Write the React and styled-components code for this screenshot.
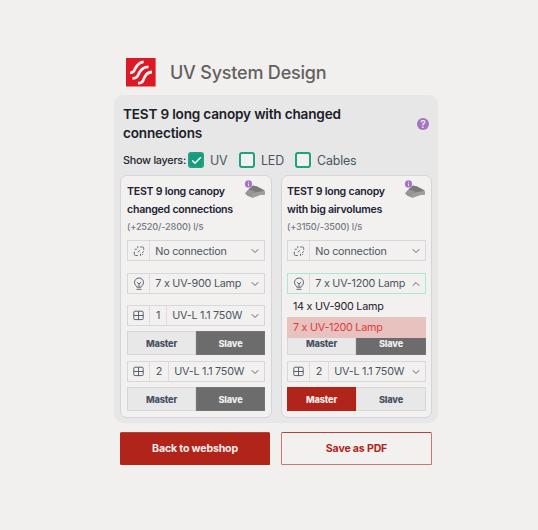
import React from "react";
import styled, { createGlobalStyle, css } from "styled-components";

const GlobalStyle = createGlobalStyle`
  * { box-sizing: border-box; }
  body { margin: 0; background: #f2f0ef; font-family: Inter, "Liberation Sans", sans-serif; }
  button { font-family: inherit; }
`;

const Page = styled.main`
  width: 538px;
  height: 530px;
  padding: 58px 100px 0 114px;
  background: #f2f0ef;
  overflow: hidden;
`;

const Header = styled.header`
  display: flex;
  align-items: center;
  gap: 14px;
  height: 29px;
  padding-left: 12px;
`;

const AppTitle = styled.h1`
  margin: 0;
  font-size: 18px;
  font-weight: 500;
  line-height: 29px;
  letter-spacing: -0.2px;
  color: #626160;
  white-space: nowrap;
`;

const Panel = styled.section`
  height: 328px;
  margin-top: 8px;
  padding: 9px 6px 0 6px;
  border-radius: 9px;
  background: #e7e7e7;
`;

const PanelHead = styled.div`
  display: flex;
  justify-content: space-between;
  height: 40px;
  padding: 0 3px;
`;

const PanelTitle = styled.h2`
  margin: 0;
  width: 240px;
  padding-top: 1px;
  font-size: 13.6px;
  font-weight: 600;
  line-height: 19px;
  letter-spacing: -0.19px;
  color: #1b2027;
`;

const HelpBadge = styled.span`
  display: flex;
  align-items: center;
  justify-content: center;
  width: 12px;
  height: 12px;
  margin: 14px 0 0;
  border-radius: 50%;
  background: #a374c4;
  color: #f5eef8;
  font-size: 10px;
  font-weight: 600;
  line-height: 12px;
`;

const Layers = styled.div`
  display: flex;
  align-items: center;
  height: 18px;
  margin-top: 7px;
  padding-left: 3px;
  font-size: 10.8px;
  font-weight: 500;
  letter-spacing: -0.25px;
  color: #22262c;
  white-space: nowrap;
`;

const LayersLabel = styled.span`
  width: 65px;
`;

const Layer = styled.label`
  display: flex;
  align-items: center;
  gap: 6px;
  width: ${(p) => p.$width}px;
  font-size: 12.4px;
  font-weight: 400;
  letter-spacing: -0.15px;
  color: #4b5563;
`;

const Box = styled.span`
  display: flex;
  align-items: center;
  justify-content: center;
  width: 16px;
  height: 16px;
  border: 2px solid #22a080;
  border-radius: 3px;
  background: ${(p) => (p.$checked ? "#159b79" : "#f3f1ef")};
`;

const Cards = styled.div`
  display: grid;
  grid-template-columns: 152px 151px;
  gap: 9px;
  margin-top: 6px;
`;

const Card = styled.article`
  height: 243px;
  padding: 6px 5px 0 ${(p) => p.$inset}px;
  border: 1px solid #d3d5da;
  border-radius: 7px;
  background: #f3f1f0;
`;

const CardHead = styled.div`
  display: flex;
  justify-content: space-between;
  height: 36px;
`;

const CardTitle = styled.h3`
  margin: 0;
  padding-top: 1px;
  font-size: 10.6px;
  font-weight: 600;
  line-height: 17.5px;
  letter-spacing: -0.25px;
  color: #1b2333;
  white-space: nowrap;
`;

const Thumb = styled.svg`
  flex: none;
  width: 22px;
  height: 20px;
  margin: -2px 0 0 -4px;
`;

const Flow = styled.div`
  height: 17px;
  font-size: 9.2px;
  font-weight: 500;
  line-height: 17px;
  letter-spacing: -0.18px;
  color: #737884;
`;

const Fields = styled.div`
  display: flex;
  flex-direction: column;
  width: ${(p) => p.$width}px;
  margin-top: 5px;
`;

const FieldWrap = styled.div`
  position: relative;
  margin-bottom: ${(p) => p.$gap}px;
`;

const Field = styled.div`
  display: flex;
  height: 21px;
  border: 1px solid ${(p) => (p.$open ? "#a9e8d2" : "#d7d7de")};
  font-size: 10.8px;
  line-height: ${(p) => (p.$low ? 21 : 20)}px;
  letter-spacing: -0.25px;
  color: #4b5563;
  white-space: nowrap;
`;

const Cell = styled.span`
  display: flex;
  align-items: center;
  justify-content: center;
  flex: none;
  width: ${(p) => p.$width}px;
  border-right: 1px solid #dcdce1;
`;

const Value = styled.span`
  flex: 1;
  padding-left: ${(p) => p.$pad}px;
`;

const Caret = styled.svg`
  flex: none;
  align-self: center;
  width: 8px;
  height: 8px;
  margin-right: 5px;
  transform: ${(p) => (p.$open ? "rotate(180deg)" : "none")};
`;

const Menu = styled.div`
  position: absolute;
  z-index: 2;
  top: 23px;
  left: 0;
  right: 0;
  background: #f3f1f0;
`;

const Option = styled.div`
  height: 21px;
  padding-left: 6px;
  font-size: 10.8px;
  line-height: 21px;
  letter-spacing: -0.27px;
  color: ${(p) => (p.$active ? "#e03c3c" : "#1d232d")};
  background: ${(p) => (p.$active ? "#e7c2be" : "#f3f1f0")};
`;

const Toggle = styled.div`
  display: grid;
  grid-template-columns: 69px 1fr;
  height: 24px;
  margin-bottom: ${(p) => p.$gap}px;
`;

const tones = {
  off: css`background: #e8e8e8; color: #465060; border-color: #d7d7da;`,
  dark: css`background: #6c6c6c; color: #efefef; border-color: #747474;`,
  red: css`background: #b1241a; color: #f8eeee; border-color: #b1241a;`,
};

const Side = styled.button`
  padding: 0;
  border: 1px solid;
  font-size: 9.2px;
  font-weight: 800;
  letter-spacing: -0.15px;
  ${(p) => tones[p.$tone]}
`;

const Actions = styled.footer`
  display: grid;
  grid-template-columns: 150px 151px;
  gap: 11px;
  padding: 9px 0 0 6px;
`;

const Action = styled.button`
  height: 33px;
  padding: 0;
  border: 1px solid ${(p) => (p.$solid ? "#b1241a" : "#cb7770")};
  border-top-color: #b1453d;
  border-radius: 1.5px;
  background: ${(p) => (p.$solid ? "#b1241a" : "#f3f1f0")};
  color: ${(p) => (p.$solid ? "#faeeee" : "#b1241a")};
  font-size: 10.6px;
  font-weight: 700;
  letter-spacing: -0.17px;
`;

const Logo = () => (
  <svg width="30" height="29" viewBox="0 0 30 29">
    <rect width="29.600" height="28.500" fill="#dc1a26" />
    <g fill="none" stroke="#fbf3f2" strokeWidth="2.800">
      <path d="M4 14.800c4.200.2 4-2.200 5.400-4.600C11.200 7 13 4 17.600 3.800" />
      <path d="M6.500 20.300c4.800.2 5-2.200 6.800-5.600 1.800-3.500 4-5.900 9.200-5.900" />
      <path d="M12 25.200c4.500 0 5-2.400 6.300-5.400 1.500-3.500 3.300-5.600 7.700-5.800" />
    </g>
  </svg>
);

const Tick = () => (
  <svg width="11" height="9" viewBox="0 0 11 9" fill="none" stroke="#fff" strokeWidth="1.600">
    <path d="M1.200 4.500 4 7.200 9.800 1.300" />
  </svg>
);

const icons = {
  link: (
    <svg width="12" height="12" viewBox="0 0 12 12" fill="none" stroke="#69707b" strokeWidth="1" strokeLinecap="round">
      <path d="M7.500 2H9.500Q10.700 2 10.700 3.200V4.500M4.500 10.500H2.500Q1.300 10.500 1.300 9.300V7M4.800 1.500v1.300M2 4.300h1.500M5 7l1.700-1.500M10.500 6.800 9.300 7.500M7.500 9v1.500M9.600 9.500v.1" />
    </svg>
  ),
  bulb: (
    <svg width="12" height="14" viewBox="0 0 12 14" fill="none" stroke="#596170" strokeWidth="1">
      <path d="M3.800 10.200V9.400a4.500 4.500 0 1 1 4.400 0v.8ZM3.600 12.300h4.800M4 5.300l2 1.600 2-1.600M6 6.900v3" />
    </svg>
  ),
  grid: (
    <svg width="11" height="11" viewBox="0 0 11 11" fill="none" stroke="#596170" strokeWidth="1">
      <rect x=".8" y="1.200" width="9.400" height="8.400" rx="1" />
      <path d="M5.500 1.200v8.400M.8 5.500h9.400" />
    </svg>
  ),
};

const HoodThumb = () => (
  <Thumb viewBox="0 0 22 20">
    <path d="M1 13.500 4.500 9.500 9 5.500 13 6.500 20.500 10.500 21 14.500 16 15 8.500 17.800 3.500 15.800Z" fill="#908f8e" />
    <path d="M4.500 9.500 9 5.500 13 6.500 20.500 10.500 10 13Z" fill="#7b7a79" />
    <path d="M1 13.500 4.500 9.500 11 11.500 7 15Z" fill="#989795" />
    <path d="M7 15 11 12.500 20.500 11 21 14.500 16 15 8.500 17.800Z" fill="#9f9e9d" />
    <circle cx="4.500" cy="3.900" r="3.600" fill="#a276c5" />
    <path d="M4.500 1.800v1M4.500 3.600v2.400" stroke="#e9def0" strokeWidth="1" />
  </Thumb>
);

function Select({ icon, number, numberWidth = 17, value, gap, open, low, options }) {
  return (
    <FieldWrap $gap={gap}>
      <Field $open={open} $low={low}>
        <Cell $width={22}>{icons[icon]}</Cell>
        {number && <Cell $width={numberWidth}>{number}</Cell>}
        <Value $pad={number ? 5.3 : 5.3}>{value}</Value>
        <Caret $open={open} viewBox="0 0 8 8" fill="none" stroke="#5b6470" strokeWidth="1" strokeLinecap="round">
          <path d="M1 2.500 4 5.500 7 2.500" />
        </Caret>
      </Field>
      {options && (
        <Menu>
          {options.map((o) => (
            <Option key={o} $active={o === value}>{o}</Option>
          ))}
        </Menu>
      )}
    </FieldWrap>
  );
}

function MasterSlave({ master, slave, gap = 0 }) {
  return (
    <Toggle $gap={gap}>
      <Side $tone={master}>Master</Side>
      <Side $tone={slave}>Slave</Side>
    </Toggle>
  );
}

function Canopy({ lines, flow, lamp, options, last, inset, fieldWidth }) {
  return (
    <Card $inset={inset}>
      <CardHead>
        <CardTitle>{lines[0]}<br />{lines[1]}</CardTitle>
        <HoodThumb />
      </CardHead>
      <Flow>{flow}</Flow>
      <Fields $width={fieldWidth}>
        <Select icon="link" value="No connection" gap={12} low />
        <Select icon="bulb" value={lamp} gap={11} open={!!options} options={options} />
        <Select icon="grid" number="1" value="UV-L 1.1 750W" gap={5} />
        <MasterSlave master="off" slave="dark" gap={6} />
        <Select icon="grid" number="2" numberWidth={19} value="UV-L 1.1 750W" gap={5} />
        <MasterSlave {...last} />
      </Fields>
    </Card>
  );
}

export default function App() {
  return (
    <>
      <GlobalStyle />
      <Page>
        <Header>
          <Logo />
          <AppTitle>UV System Design</AppTitle>
        </Header>
        <Panel>
          <PanelHead>
            <PanelTitle>TEST 9 long canopy with changed connections</PanelTitle>
            <HelpBadge>?</HelpBadge>
          </PanelHead>
          <Layers>
            <LayersLabel>Show layers:</LayersLabel>
            <Layer $width={51}><Box $checked><Tick /></Box>UV</Layer>
            <Layer $width={56}><Box />LED</Layer>
            <Layer $width={70}><Box />Cables</Layer>
          </Layers>
          <Cards>
            <Canopy
              inset={6}
              fieldWidth={138}
              lines={["TEST 9 long canopy", "changed connections"]}
              flow="(+2520/-2800) l/s"
              lamp="7 x UV-900 Lamp"
              last={{ master: "off", slave: "dark" }}
            />
            <Canopy
              inset={5}
              fieldWidth={139}
              lines={["TEST 9 long canopy", "with big airvolumes"]}
              flow="(+3150/-3500) l/s"
              lamp="7 x UV-1200 Lamp"
              options={["14 x UV-900 Lamp", "7 x UV-1200 Lamp"]}
              last={{ master: "red", slave: "off" }}
            />
          </Cards>
        </Panel>
        <Actions>
          <Action $solid>Back to webshop</Action>
          <Action>Save as PDF</Action>
        </Actions>
      </Page>
    </>
  );
}
